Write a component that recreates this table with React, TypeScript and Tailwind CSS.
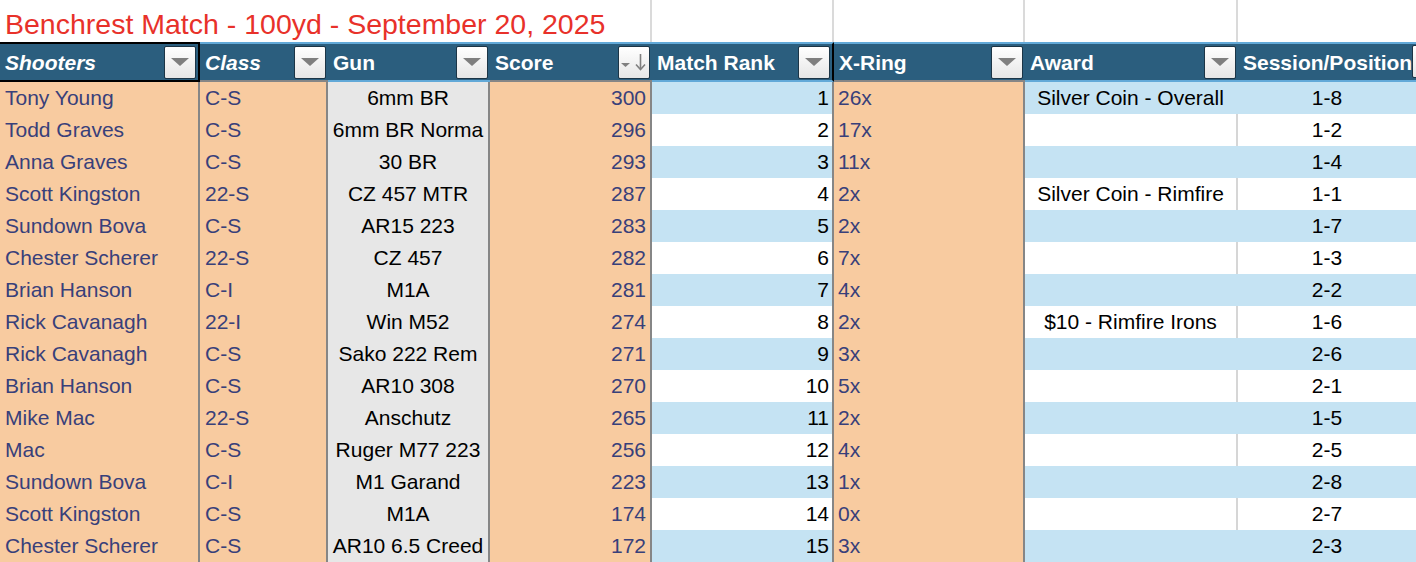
import React from "react";

const COLS = "grid grid-cols-[200px_128px_162px_162px_182px_191px_213px_178px]";

type R = [string, string, string, string, string, string, string, string];

const rows: R[] = [
  ["Tony Young", "C-S", "6mm BR", "300", "1", "26x", "Silver Coin - Overall", "1-8"],
  ["Todd Graves", "C-S", "6mm BR Norma", "296", "2", "17x", "", "1-2"],
  ["Anna Graves", "C-S", "30 BR", "293", "3", "11x", "", "1-4"],
  ["Scott Kingston", "22-S", "CZ 457 MTR", "287", "4", "2x", "Silver Coin - Rimfire", "1-1"],
  ["Sundown Bova", "C-S", "AR15 223", "283", "5", "2x", "", "1-7"],
  ["Chester Scherer", "22-S", "CZ 457", "282", "6", "7x", "", "1-3"],
  ["Brian Hanson", "C-I", "M1A", "281", "7", "4x", "", "2-2"],
  ["Rick Cavanagh", "22-I", "Win M52", "274", "8", "2x", "$10 - Rimfire Irons", "1-6"],
  ["Rick Cavanagh", "C-S", "Sako 222 Rem", "271", "9", "3x", "", "2-6"],
  ["Brian Hanson", "C-S", "AR10 308", "270", "10", "5x", "", "2-1"],
  ["Mike Mac", "22-S", "Anschutz", "265", "11", "2x", "", "1-5"],
  ["Mac", "C-S", "Ruger M77 223", "256", "12", "4x", "", "2-5"],
  ["Sundown Bova", "C-I", "M1 Garand", "223", "13", "1x", "", "2-8"],
  ["Scott Kingston", "C-S", "M1A", "174", "14", "0x", "", "2-7"],
  ["Chester Scherer", "C-S", "AR10 6.5 Creed", "172", "15", "3x", "", "2-3"],
];

function FilterBtn({ sort = false }: { sort?: boolean }) {
  return (
    <div className="w-[32px] h-[33px] shrink-0 rounded-[2px] border border-[#1c3546] bg-gradient-to-b from-[#ffffff] to-[#e6e6e6] flex items-center justify-center">
      {sort ? (
        <svg width="30" height="31" viewBox="0 0 30 31">
          <polygon points="2,16 11,16 6.5,20" fill="#7f7f7f" />
          <line x1="21.5" y1="7" x2="21.5" y2="22" stroke="#7f7f7f" strokeWidth="1.6" />
          <polyline points="17,17.5 21.5,22.5 26,17.5" fill="none" stroke="#7f7f7f" strokeWidth="1.6" />
        </svg>
      ) : (
        <svg width="18" height="8" viewBox="0 0 18 8">
          <polygon points="0,0 18,0 9,8" fill="#7f7f7f" />
        </svg>
      )}
    </div>
  );
}

function HeadCell({
  label,
  italic = false,
  extra = "",
  sort = false,
}: {
  label: string;
  italic?: boolean;
  extra?: string;
  sort?: boolean;
}) {
  return (
    <div
      className={`relative h-[40px] border-t-2 border-b-2 bg-[#2b5e7e] flex items-center justify-between pl-[5px] pr-[2px] overflow-hidden ${extra}`}
    >
      <span className={`text-white font-bold text-[21px] pt-[1px] whitespace-nowrap ${italic ? "italic" : ""}`}>{label}</span>
      <FilterBtn sort={sort} />
    </div>
  );
}

export default function App() {
  return (
    <div
      className="w-[1416px] h-[562px] overflow-hidden bg-white"
      style={{ fontFamily: '"Liberation Sans", Arial, sans-serif' }}
    >
      {/* Title row */}
      <div className={`${COLS} h-[42px]`}>
        <div className="col-span-4 border-r-2 border-[#dadada] flex items-center pl-[5px] pt-[3px]">
          <span className="text-[28.5px] text-[#e8312a] whitespace-nowrap">Benchrest Match - 100yd - September 20, 2025</span>
        </div>
        <div className="border-r-2 border-[#dadada]" />
        <div className="border-r-2 border-[#dadada]" />
        <div className="border-r-2 border-[#dadada]" />
        <div />
      </div>

      {/* Header */}
      <div className={COLS}>
        <HeadCell label="Shooters" italic extra="border-black border-r-2 border-r-black" />
        <HeadCell label="Class" italic extra="border-t-[#62a9d8] border-b-[#868686]" />
        <HeadCell label="Gun" extra="border-t-[#62a9d8] border-b-[#62a9d8]" />
        <HeadCell label="Score" sort extra="border-t-[#62a9d8] border-b-[#868686]" />
        <HeadCell label="Match Rank" extra="border-t-[#62a9d8] border-b-[#62a9d8] border-r-2 border-r-black" />
        <HeadCell label="X-Ring" extra="border-t-[#62a9d8] border-b-[#868686]" />
        <HeadCell label="Award" extra="border-t-[#62a9d8] border-b-[#62a9d8]" />
        <div className="relative h-[40px] border-t-2 border-b-2 border-[#62a9d8] bg-[#2b5e7e] flex items-center pl-[5px] overflow-hidden">
          <span className="text-white font-bold text-[21px] pt-[1px] whitespace-nowrap">Session/Position</span>
          <div className="absolute left-[174px] top-[1px]">
            <FilterBtn />
          </div>
        </div>
      </div>

      {/* Rows */}
      {rows.map((r, i) => {
        const blue = i % 2 === 0;
        const stripe = blue ? "bg-[#c5e3f3]" : "bg-white";
        const peach = "bg-[#f8cba0] border-r-2 border-b-2 border-[#868686] text-[#38407a]";
        return (
          <div key={i} className={`${COLS} h-[32px] text-[21px]`}>
            <div className={`${peach} flex items-center pl-[5px] whitespace-nowrap`}>{r[0]}</div>
            <div className={`${peach} flex items-center pl-[5px]`}>{r[1]}</div>
            <div className="bg-[#e7e7e7] border-r-2 border-r-[#868686] border-b-2 border-b-[#62a9d8] flex items-center justify-center text-black whitespace-nowrap">
              {r[2]}
            </div>
            <div className={`${peach} flex items-center justify-end pr-[4px]`}>{r[3]}</div>
            <div className={`${stripe} border-r-2 border-r-[#868686] border-b-2 border-b-[#62a9d8] flex items-center justify-end pr-[3px] text-black`}>
              {r[4]}
            </div>
            <div className={`${peach} flex items-center pl-[4px]`}>{r[5]}</div>
            <div
              className={`${stripe} border-r-2 ${blue ? "border-r-[#c5e3f3]" : "border-r-[#d6d6d6]"} border-b-2 border-b-[#62a9d8] flex items-center justify-center text-black whitespace-nowrap`}
            >
              {r[6]}
            </div>
            <div className={`${stripe} border-b-2 border-b-[#62a9d8] flex items-center justify-center text-black`}>{r[7]}</div>
          </div>
        );
      })}
    </div>
  );
}
